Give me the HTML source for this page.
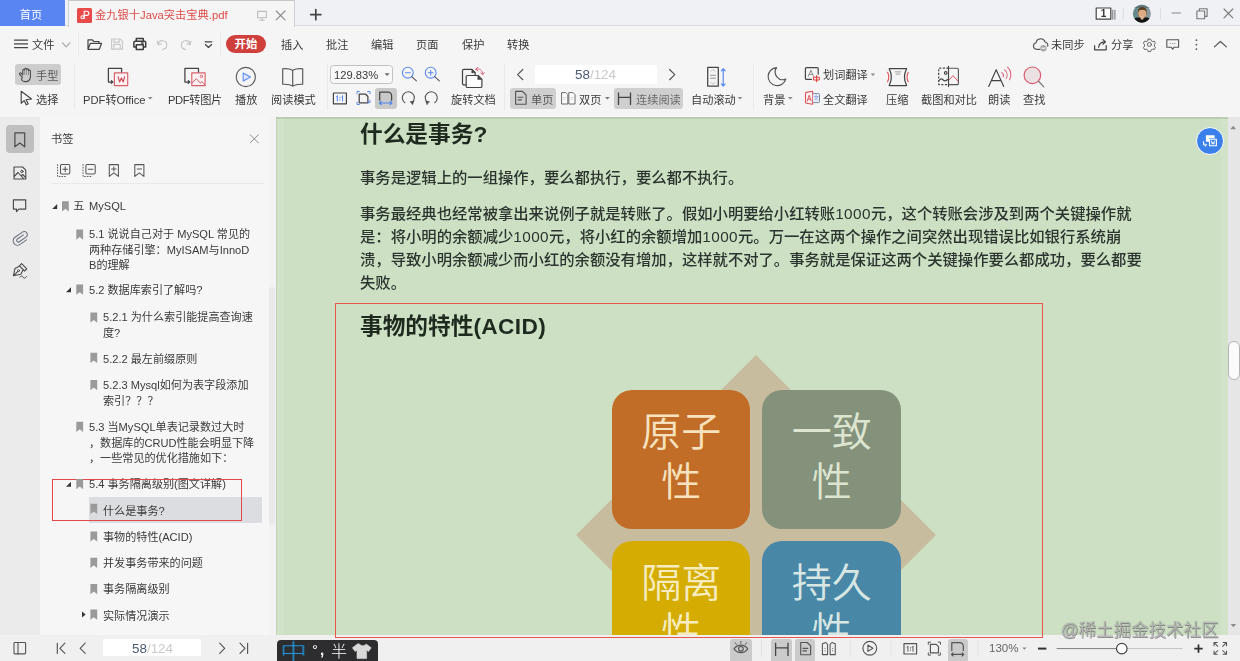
<!DOCTYPE html>
<html lang="zh-CN">
<head>
<meta charset="utf-8">
<title>金九银十Java突击宝典.pdf</title>
<style>
*{box-sizing:border-box;margin:0;padding:0}
html,body{width:1240px;height:661px;overflow:hidden}
body{position:relative;background:#f5f5f5;font-family:"Liberation Sans","Noto Sans CJK SC",sans-serif;font-size:12px;color:#3c3c3c;-webkit-font-smoothing:antialiased}
.abs{position:absolute}
.t,.bm,.doc-p,.doc-h,#home{will-change:transform}
.t{position:absolute;white-space:nowrap;line-height:16px;height:16px;font-size:11.2px;color:#3a3a3a}
svg{position:absolute;overflow:visible}
/* title bar */
#titlebar{position:absolute;left:0;top:0;width:1240px;height:26px;background:#eff1f5;border-bottom:1px solid #d9dbdf}
#home{position:absolute;left:0;top:0;width:65px;height:26px;background:#5985f3;color:#fff;font-size:11.2px;line-height:26px;text-align:center;padding-top:2px;padding-right:3px}
#tab{position:absolute;left:68px;top:0;width:227px;height:27px;background:#f5f5f5;border:1px solid #d0d1d5;border-top-color:#c6c6c6;border-bottom:none}
#menubar{position:absolute;left:0;top:27px;width:1240px;height:31px;background:#f5f5f5}
#toolbar{position:absolute;left:0;top:58px;width:1240px;height:59px;background:#f5f5f5}
.vsep{position:absolute;width:1px;background:#e9e9e9}
.sel{position:absolute;background:#cfcfcf;border-radius:3px}
/* left */
#strip{position:absolute;left:0;top:117px;width:40px;height:518px;background:#ebebeb}
#panel{position:absolute;left:40px;top:117px;width:236px;height:518px;background:#f6f6f6}
#doc{position:absolute;left:276px;top:117px;width:952px;height:518px;background:#cde0c4;overflow:hidden}
#vscroll{position:absolute;left:1228px;top:117px;width:12px;height:518px;background:#e6e6e6}
#status{position:absolute;left:0;top:635px;width:1240px;height:26px;background:#f0f0f0}
.bm{position:absolute;font-size:11.1px;line-height:15.5px;color:#3a3a3a;white-space:nowrap}
.doc-h{position:absolute;font-weight:700;color:#1f2a1f;white-space:nowrap;font-size:22.7px;line-height:30px}
.doc-p{position:absolute;font-weight:500;color:#2b342e;white-space:nowrap;font-size:15.34px;line-height:23px}
.tile{position:absolute;width:138.7px;height:138.8px;border-radius:20px;font-size:40px;font-weight:350;line-height:49.5px;text-align:center;padding-top:18.25px}
</style>
</head>
<body>
<!-- TITLE BAR -->
<div id="titlebar"></div>
<div id="home">首页</div>
<div id="tab"></div>
<div class="abs" style="left:77px;top:8px;width:15px;height:14.6px;background:#e84a4a;border-radius:1.5px"></div>
<div class="t" style="left:95px;top:7px;font-size:11.25px;color:#dc4a47">金九银十Java突击宝典.pdf</div>

<!-- MENU BAR -->
<div id="menubar"></div>
<div class="t" style="left:32.3px;top:36.5px">文件</div>
<div class="vsep" style="left:78px;top:31px;height:25px"></div>
<div class="vsep" style="left:220px;top:31px;height:25px"></div>
<div class="abs" style="left:226px;top:35px;width:40px;height:18px;border-radius:9px;background:#cf3f3c;color:#fff;font-weight:700;font-size:11.4px;line-height:18px;text-align:center">开始</div>
<div class="t" style="left:281px;top:37px">插入</div>
<div class="t" style="left:326px;top:37px">批注</div>
<div class="t" style="left:371px;top:37px">编辑</div>
<div class="t" style="left:416px;top:37px">页面</div>
<div class="t" style="left:462px;top:37px">保护</div>
<div class="t" style="left:507px;top:37px">转换</div>
<div class="t" style="left:1051px;top:37px">未同步</div>
<div class="t" style="left:1111px;top:37px">分享</div>

<!-- TOOLBAR -->
<div id="toolbar"></div>
<div class="sel" style="left:14.8px;top:63.7px;width:46.5px;height:21.5px;background:#cdcdcd"></div>
<div class="t" style="left:36.3px;top:67.5px;color:#5a5a5a">手型</div>
<div class="t" style="left:36.3px;top:92px">选择</div>
<div class="vsep" style="left:73.5px;top:64px;height:46px"></div>
<div class="t" style="left:83.2px;top:91.6px">PDF转Office</div>
<div class="t" style="left:168.4px;top:91.6px;letter-spacing:-.35px">PDF转图片</div>
<div class="t" style="left:235px;top:91.6px">播放</div>
<div class="t" style="left:271px;top:91.6px">阅读模式</div>
<div class="vsep" style="left:326.5px;top:64px;height:46px"></div>
<div class="abs" style="left:329.5px;top:64.5px;width:63px;height:19.3px;border:1px solid #c2c2c2;border-radius:3.5px;background:#f8f8f8"></div>
<div class="t" style="left:334px;top:67px">129.83%</div>
<div class="sel" style="left:375px;top:87.5px;width:21.5px;height:21px;background:#c9c9c9"></div>
<div class="t" style="left:451px;top:91.6px">旋转文档</div>
<div class="vsep" style="left:504px;top:64px;height:46px"></div>
<div class="abs" style="left:535px;top:65px;width:122px;height:19px;background:#fff;border-radius:2px"></div>
<div class="t" style="left:575px;top:66px;font-size:13.4px;line-height:18px;height:18px;color:#4b5b78">58<span style="color:#c9c9c9">/124</span></div>
<div class="sel" style="left:510px;top:88px;width:46px;height:21px"></div>
<div class="t" style="left:531px;top:91.6px;color:#555">单页</div>
<div class="t" style="left:579px;top:91.6px">双页</div>
<div class="sel" style="left:614px;top:88px;width:69px;height:21px"></div>
<div class="t" style="left:635.8px;top:91.6px;color:#6a6a6a">连续阅读</div>
<div class="t" style="left:691px;top:91.6px">自动滚动</div>
<div class="vsep" style="left:753px;top:64px;height:46px"></div>
<div class="t" style="left:763px;top:91.6px">背景</div>
<div class="t" style="left:823px;top:67px">划词翻译</div>
<div class="t" style="left:823px;top:91.6px">全文翻译</div>
<div class="t" style="left:886px;top:91.6px">压缩</div>
<div class="t" style="left:921px;top:91.6px">截图和对比</div>
<div class="t" style="left:988px;top:91.6px">朗读</div>
<div class="t" style="left:1023px;top:91.6px">查找</div>

<!-- LEFT STRIP / PANEL -->
<div id="strip"></div>
<div id="panel"></div>
<div class="sel" style="left:6px;top:125px;width:28px;height:28px;border-radius:4px;background:#bfbfbf"></div>
<div class="t" style="left:51px;top:131px">书签</div>
<div class="abs" style="left:51px;top:183px;width:213px;height:1px;background:#e9e9e9"></div>
<div class="abs" style="left:268.5px;top:117px;width:7.5px;height:518px;background:#f3f3f3"></div>
<div class="abs" style="left:268.5px;top:287px;width:6px;height:238px;background:#e9e9e9;border-radius:3px"></div>
<div class="abs" style="left:89px;top:496.5px;width:172.5px;height:26px;background:#dcdde0"></div>
<div class="bm" style="left:75px;top:199.3px"><span style="margin-left:-1.8px;margin-right:1.6px">五</span> MySQL</div>
<div class="bm" style="left:89px;top:226.6px">5.1 说说自己对于 MySQL 常见的<br>两种存储引擎：MyISAM与InnoD<br>B的理解</div>
<div class="bm" style="left:89px;top:283px">5.2 数据库索引了解吗?</div>
<div class="bm" style="left:103px;top:309.7px">5.2.1 为什么索引能提高查询速<br>度?</div>
<div class="bm" style="left:103px;top:351.5px">5.2.2 最左前缀原则</div>
<div class="bm" style="left:103px;top:377.6px">5.2.3 Mysql如何为表字段添加<br>索引？？？</div>
<div class="bm" style="left:89px;top:420px">5.3 当MySQL单表记录数过大时<br>，数据库的CRUD性能会明显下降<br>，一些常见的优化措施如下：</div>
<div class="bm" style="left:89px;top:477.2px">5.4 事务隔离级别(图文详解)</div>
<div class="bm" style="left:103px;top:503.7px">什么是事务?</div>
<div class="bm" style="left:103px;top:529.5px">事物的特性(ACID)</div>
<div class="bm" style="left:103px;top:555.9px">并发事务带来的问题</div>
<div class="bm" style="left:103px;top:582px">事务隔离级别</div>
<div class="bm" style="left:103px;top:608.5px">实际情况演示</div>
<div class="abs" style="left:52px;top:478.7px;width:190px;height:42.5px;border:1px solid #e5484a"></div>

<!-- DOC -->
<div id="doc">
<div class="abs" style="left:0;top:0;width:8px;height:519px;background:#d1e3c8"></div>
<div class="abs" style="left:945px;top:0;width:7px;height:519px;background:#d1e3c8"></div>
<div class="abs" style="left:0;top:0;width:952px;height:1.5px;background:rgba(60,70,60,.13)"></div>
<div class="abs" style="left:0;top:0;width:1px;height:519px;background:rgba(60,70,60,.1)"></div>
<div class="doc-h" style="left:84px;top:2px">什么是事务?</div>
<div class="doc-p" style="left:84.4px;top:49px">事务是逻辑上的一组操作，要么都执行，要么都不执行。</div>
<div class="doc-p" style="left:84.4px;top:85px">事务最经典也经常被拿出来说例子就是转账了。假如小明要给小红转账<span style="letter-spacing:.4px">1000</span>元，这个转账会涉及到两个关键操作就<br>是：将小明的余额减少<span style="letter-spacing:.4px">1000</span>元，将小红的余额增加<span style="letter-spacing:.4px">1000</span>元。万一在这两个操作之间突然出现错误比如银行系统崩<br>溃，导致小明余额减少而小红的余额没有增加，这样就不对了。事务就是保证这两个关键操作要么都成功，要么都要<br>失败。</div>
<div class="doc-h" style="left:84px;top:194px">事物的特性<span style="letter-spacing:.35px">(ACID)</span></div>
<svg style="left:300.4px;top:238.3px" width="360" height="360" viewBox="0 0 360 360"><polygon points="180,0 360,180 180,360 0,180" fill="#c8bc9e"/></svg>
<div class="tile" style="left:335.8px;top:273.2px;background:#c16d27;color:#f6e2bf">原子<br>性</div>
<div class="tile" style="left:486.3px;top:273.2px;background:#84927c;color:#dde5d1">一致<br>性</div>
<div class="tile" style="left:335.8px;top:423.6px;background:#d4ac02;color:#f6ecc0">隔离<br>性</div>
<div class="tile" style="left:486.3px;top:423.6px;background:#4888a6;color:#d8e6e4">持久<br>性</div>
<div class="abs" style="left:919.5px;top:9.5px;width:28.4px;height:28.4px;border-radius:15px;background:#3b80ea;border:1.6px solid #fdfdfd"></div>
</div>
<div id="vscroll"></div>
<div class="abs" style="left:1227.5px;top:340.5px;width:12px;height:39.5px;background:#fbfbfb;border:1px solid #b4b4b4;border-radius:6px"></div>

<!-- STATUS -->
<div id="status"></div>
<div class="abs" style="left:103.4px;top:639px;width:98px;height:17px;background:#fff;border-radius:1px"></div>
<div class="t" style="left:131.5px;top:640px;font-size:13.4px;line-height:18px;height:18px;color:#4b5b78">58<span style="color:#c9c9c9">/124</span></div>
<div class="abs" style="left:277px;top:640px;width:101px;height:24px;background:#2d2d2f;border-radius:4px"></div>
<div class="t" style="left:281.5px;top:639.2px;font-size:23px;line-height:26px;height:26px;color:#219fec;font-weight:300;transform:scale(1.15,.96);transform-origin:50% 50%">中</div>
<div class="t" style="left:311.5px;top:641px;font-size:15px;line-height:18px;height:18px;color:#fff">°<span style="font-weight:700;margin-left:2px">,</span></div>
<div class="t" style="left:330.5px;top:642px;font-size:16px;line-height:19px;height:19px;color:#fff;font-weight:300">半</div>
<div class="sel" style="left:729.8px;top:638.5px;width:21.8px;height:26px;background:#cbcbcb"></div>
<div class="sel" style="left:771.2px;top:638.5px;width:20.6px;height:26px;background:#cbcbcb"></div>
<div class="sel" style="left:794.7px;top:638.5px;width:20.7px;height:26px;background:#cbcbcb"></div>
<div class="sel" style="left:947.5px;top:638.5px;width:20.7px;height:26px;background:#cbcbcb"></div>
<div class="t" style="left:989px;top:640px;font-size:11.5px;color:#666">130%</div>
<div class="t" style="left:1060.5px;top:618px;font-size:17.5px;line-height:24px;height:24px;font-weight:350;color:rgba(250,250,250,.6);text-shadow:0 0 .9px rgba(60,60,60,.95),.5px .5px .6px rgba(80,80,80,.55)">@稀土掘金技术社区</div>
<div class="abs" style="left:335px;top:303px;width:707.5px;height:335px;border:1px solid #e8574c"></div>
<!-- ICON OVERLAY -->
<svg id="icons" style="left:0;top:0;pointer-events:none" width="1240" height="661" viewBox="0 0 1240 661" fill="none" stroke-linecap="round" stroke-linejoin="round">
<!--MENU-ICONS-->
<g stroke="#fff" stroke-width="1.1">
<path d="M84.2 18.5v-7.3h2.6a2.1 2.1 0 0 1 0 4.2h-2.4"/><circle cx="82.5" cy="17.3" r="1.5"/>
</g>
<path d="M257.6 11.4h8.8v6.3h-8.8zM262 17.8v2.4M259.8 20.3h4.4" stroke="#bdbdbd" stroke-width="1.1"/>
<path d="M276.2 11l8.8 8.8M285 11l-8.8 8.8" stroke="#8a8a8a" stroke-width="1.1"/>
<path d="M310.7 14.6h10.2M315.8 9.5v10.2" stroke="#444" stroke-width="1.7"/>
<g stroke="#444" stroke-width="1.2">
<path d="M14.5 40.2h13M14.5 43.9h13M14.5 47.6h13"/>
<path d="M62.5 42.8l3.7 4 3.7-4" stroke="#a8a8a8"/>
<path d="M88 49.3v-9.4h4.3l1.5 1.6h5.2v1.8M88 49.3l2.4-6h11.2l-2.3 6z"/>
<path d="M111.6 39h8.6l2.3 2.3v7.9h-10.9zM114 39v3.2h5.2V39M113.8 49v-4.6h6.4V49" stroke="#c9c9c9"/>
<path d="M136.3 41.3v-2.7h7v2.7M136.3 47h-2.4v-4.4a1.3 1.3 0 0 1 1.3-1.3h9.2a1.3 1.3 0 0 1 1.3 1.3V47h-2.4M136.3 44.8h7v4.7h-7zM141.5 42.9h1.6" stroke-width="1.5" stroke="#3c3c3c"/>
<path d="M157.4 41.2l.6 3.4 3.3-.8M158.2 44.4a4.3 4.3 0 1 1 4.6 4.9" stroke="#c6c6c6"/>
<path d="M190.8 41.2l-.6 3.4-3.3-.8M190 44.4a4.3 4.3 0 1 0-4.6 4.9" stroke="#c6c6c6"/>
<path d="M205.2 41.8h6.6M205.4 44.6l3.1 2.8 3.1-2.8" stroke-width="1.3"/>
</g>
<!--TOOLBAR-ICONS-->
<g stroke="#444" stroke-width="1.15">
<!-- hand -->
<path d="M22.3 77.2l-2.6-2.7a1 1 0 0 1 1.5-1.4l1.6 1.7v-4.6a.95.95 0 0 1 1.9 0v-.9a.95.95 0 0 1 1.9 0v.5a.95.95 0 0 1 1.9 0v1.2a.95.95 0 0 1 1.9 0v6a4.6 4.6 0 0 1-4.6 4.6h-.7a4.5 4.5 0 0 1-3.6-1.9z" stroke="#4a4a4a" stroke-width="1.1"/>
<path d="M24.7 70.4v4.2M26.6 70v4.6M28.5 71.4v3.2" stroke="#8a8a8a" stroke-width=".9"/>
<!-- cursor -->
<path d="M21.2 91.3v11.9l2.9-2.6 2.2 4.2 1.9-1-2.2-4.1 5.5-.7z"/>
<!-- pdf2office -->
<path d="M121.6 72.3v-3.9h-13.2v13.6h4.2M111.3 80.6l1.6 1.4-1.6 1.4" stroke-width="1.25"/>
<rect x="114.4" y="72.9" width="13.3" height="12.7" fill="#fdf0f1" stroke="#d8606c"/>
<path d="M118.1 76.7l1.5 5.2 1.8-4 1.8 4 1.5-5.2" stroke="#cf4659" stroke-width="1.1"/>
<!-- pdf2img -->
<path d="M198.5 72.3v-3.9h-13.6v13.6h4.6M188.2 80.6l1.6 1.4-1.6 1.4" stroke-width="1.25"/>
<rect x="191.8" y="72.9" width="13.3" height="12.7" fill="#fdf0f1" stroke="#d8606c"/>
<path d="M192 83.2l4.3-4.5 4 4.3 1.6-1.4 3 3.2" stroke="#d8606c" stroke-width="1"/>
<circle cx="201.4" cy="76.4" r="1.2" stroke="#d8606c" stroke-width="1"/>
<!-- play -->
<circle cx="245.8" cy="77" r="9.6" stroke="#5a5a5a" stroke-width="1.1"/>
<path d="M243.2 73v8l7.3-4z" stroke="#5b8bf0" fill="#dfe8fd" stroke-width="1.1"/>
<!-- book -->
<path d="M292.7 70.2c-2.6-1.5-6.5-1.7-10-1.5v15.6c3.5-.2 7.4 0 10 1.8c2.6-1.8 6.5-2 10-1.8v-15.6c-3.5-.2-7.4 0-10 1.5zM292.7 70.2v15.6" stroke="#555" stroke-width="1.15"/>
</g>
<!-- zoom group -->
<path d="M384.6 73.3h5l-2.5 2.8z" fill="#6a6a6a" stroke="none"/>
<g stroke-width="1.1">
<circle cx="407.8" cy="72.7" r="5.4" stroke="#5b8bf0"/><path d="M405.3 72.7h5" stroke="#5b8bf0"/><path d="M411.8 76.7l4.6 4.2" stroke="#555"/>
<circle cx="430.7" cy="72.7" r="5.4" stroke="#5b8bf0"/><path d="M428.2 72.7h5M430.7 70.2v5" stroke="#5b8bf0"/><path d="M434.7 76.7l4.6 4.2" stroke="#555"/>
<rect x="333.4" y="93" width="13" height="10.8" stroke="#444" stroke-width="1.2"/>
<path d="M337.3 96v5M342.6 96v5M336.6 96.7l.7-.7M341.9 96.7l.7-.7" stroke="#4f83ee" stroke-width="1"/><path d="M339.9 97.4v.3M339.9 99.7v.3" stroke="#4f83ee" stroke-width="1"/>
<path d="M359.2 94h6.2l2.5 2.5v6.4h-8.7z" stroke="#444" stroke-width="1.25"/>
<path d="M357 94.3v-2.3h2.3M367.7 92h2.3v2.3M370 100.7v2.3h-2.3M359.3 105h-2.3v-2.3" stroke="#5b8bf0" stroke-width="1" transform="translate(0 -.5)"/>
<path d="M379.7 100.2v-8h8.3a3.6 3.6 0 0 1 3.6 3.6v4.4" stroke="#444" stroke-width="1.25"/>
<path d="M379.6 103h12.2M381.2 101.4l-1.7 1.6 1.7 1.6M390.2 101.4l1.7 1.6-1.7 1.6" stroke="#4f83ee" stroke-width="1.15"/>
<path d="M404.9 102.7a6 6 0 1 1 7.3-.3" stroke="#555"/><path d="M410.4 101.6l3.3-.3-1 3.2z" fill="#444" stroke="#444" stroke-width=".5"/>
<path d="M434.7 102.7a6 6 0 1 0-7.3-.3" stroke="#555"/><path d="M429.2 101.6l-3.3-.3 1 3.2z" fill="#444" stroke="#444" stroke-width=".5"/>
</g>
<!-- rotate doc -->
<g stroke="#444" stroke-width="1.2">
<path d="M466 84.9h-2.2a1.3 1.3 0 0 1-1.3-1.3v-12.9a1.3 1.3 0 0 1 1.3-1.3h8.2l3.2 3.2v2.6"/>
<path d="M467.5 75.5h10.6l3.8 3.8v6.9a1.3 1.3 0 0 1-1.3 1.3h-13.1a1.3 1.3 0 0 1-1.3-1.3v-9.4a1.3 1.3 0 0 1 1.3-1.3z" fill="#fcfcfc"/>
<path d="M478 75.6l3.8 3.8h-3.8z" fill="#444" stroke-width=".6"/><path d="M472 69.6l3.1 3.1h-3.1z" fill="#444" stroke-width=".6"/>
<path d="M476 69.4c3.5-1.6 6.9.8 6.6 4.9M477.6 67.4l-1.9 2 2.2 1.5M480.8 72.9l1.8 1.8 1.7-2" stroke="#e0607a" stroke-width="1"/>
<!-- pager -->
<path d="M522.8 69.5l-5.2 5.1 5.2 5.1M669.6 69.5l5.2 5.1-5.2 5.1" stroke="#555" stroke-width="1.2"/>
<!-- single page -->
<path d="M515.6 91.4h6.9l3.6 3.6v9.2h-10.5zM518 97.2h5M518 99.8h3.5" stroke="#555" stroke-width="1.15"/>
<!-- double page -->
<path d="M562 92.6h3.8l2 2v9.4h-5.8zM569.2 92.6h3.8l2 2v9.4h-5.8z" fill="#fdfdfd" stroke="#6a6a6a" stroke-width="1"/>
<path d="M563.5 97.5h2.6M563.5 99.6h1.8M570.7 97.5h2.6M570.7 99.6h1.8" stroke="#c9c9c9" stroke-width=".8"/>
<path d="M605 97h4.8l-2.4 2.6z" fill="#777" stroke="none"/>
<!-- continuous -->
<path d="M618.5 92.4v12.6M630.5 92.4v12.6M618.5 97.3h12" stroke="#444" stroke-width="1.3" stroke-linecap="butt"/>
<!-- auto scroll -->
<rect x="707.7" y="67.4" width="10.6" height="18.8" stroke-width="1.25"/>
<path d="M711 71.2l2-1.7 2 1.7M711 82.4l2 1.7 2-1.7" stroke="#b9b9b9" stroke-width=".9"/><path d="M710.5 75.3h5M710.5 78.2h5" stroke="#8a8a8a" stroke-width=".9"/>
<path d="M723.2 69v16.5M721.3 70.8l1.9-2.2 1.9 2.2M721.3 83.9l1.9 2.2 1.9-2.2" stroke="#5b8bf0" stroke-width="1.2"/>
<path d="M147.8 97h4.8l-2.4 2.6zM737.6 97h4.8l-2.4 2.6zM787.9 97h4.8l-2.4 2.6zM870.6 73.4h4.6l-2.3 2.5z" fill="#8a8a8a" stroke="none"/>
<!-- moon -->
<path d="M776.6 67.6a9 9 0 1 0 9.2 11.4a7.6 7.6 0 0 1-9.2-11.4z" stroke="#555" stroke-width="1.15"/>
<!-- translate word -->
<path d="M811.5 79.3h-5a1.1 1.1 0 0 1-1.1-1.1v-9.4a1.1 1.1 0 0 1 1.1-1.1h10.6a1.1 1.1 0 0 1 1.1 1.1v5.4" stroke-width="1.2"/>
<path d="M808.3 76.4l2.6-6.2 2.6 6.2M809.2 74.4h3.4" stroke="#8e8e8e" stroke-width="1"/>
<path d="M813.9 77.2h5.4v2.8h-5.4zM816.6 75.6v6.2" stroke="#e23b3b" stroke-width="1"/>
<!-- translate full -->
<path d="M812.6 91.3l-6.2 1.1a1 1 0 0 0-.9 1v8.8a1 1 0 0 0 .9 1l6.2 1.1z" stroke="#e2525a" stroke-width="1.1" fill="#fdf3f3"/>
<path d="M807.3 101l1.9-5.8 1.9 5.8M808 99.2h2.4" stroke="#e2525a" stroke-width=".95"/>
<path d="M812.8 93.6h5.8a.9.9 0 0 1 .9.9v7.2a.9.9 0 0 1-.9.9h-5.8" stroke="#7f8aa0" stroke-width="1" fill="#e9edf6"/>
<path d="M814.4 96.6h3.6M814.6 100.2l3.2-3.4M814.8 97.3l3 2.9M816.2 95.5v.9" stroke="#7f9be0" stroke-width=".7"/>
<!-- compress -->
<path d="M889.2 68.7h17.4c-2.7 5.2-2.7 11.4 0 16.8h-17.4c2.7-5.4 2.7-11.6 0-16.8z" stroke-width="1.25"/>
<path d="M895.3 71.9h5.4M896.1 74.1h3.8" stroke="#8a8a8a" stroke-width=".8"/>
<path d="M887.6 72.2c1.5 3.2 1.5 6.4 0 9.6M908.2 72.2c-1.5 3.2-1.5 6.4 0 9.6" stroke="#e2525a" stroke-width="1.1"/>
<!-- screenshot -->
<path d="M948.5 68.2h-9.8v16.4h9.8" stroke-dasharray="2.1 1.5" stroke-linecap="butt" stroke-width="1.25"/>
<path d="M948.5 68.2h8.7a1.2 1.2 0 0 1 1.2 1.2v14a1.2 1.2 0 0 1-1.2 1.2h-8.7" stroke-width="1.15" stroke="#555"/>
<path d="M948.5 66.4v20.2" stroke-width="1.15"/>
<path d="M939.4 80.1c1.5-1.7 2.5-1.7 3.7-.3s2.6 1.5 4.6-.2" stroke-width="1.3"/><circle cx="945.7" cy="72.9" r="1.3" stroke-width="1.1"/>
<path d="M949.4 79.6l3.6-4 4.7 5.3" stroke="#e2525a" stroke-width="1"/>
<!-- read aloud -->
<path d="M988.7 86.4l7.5-16.7 7.5 16.7M991.4 80.6h9.7" stroke-width="1.15"/>
<path d="M1001.8 72.6a3.3 3.3 0 0 1 1.3 4.1M1004.6 69.9a6.5 6.5 0 0 1 1.7 8.4M1007.5 67.2a10 10 0 0 1 2 12.6" stroke="#e0607a" stroke-width="1.05"/>
<!-- find -->
<circle cx="1032.4" cy="75.3" r="8.3" stroke="#dc5a70" fill="#ebe1e2" stroke-width="1.15"/>
<path d="M1038.5 81.3l5.3 5.6" stroke="#777" stroke-width="1.25"/>
</g>
<!-- title right -->
<g stroke-width="1.15" stroke="#444">
<rect x="1096.2" y="8" width="14.6" height="11.2" fill="#fff" stroke-width="1.2"/>
<text x="1103.5" y="17.3" font-size="10" font-weight="700" fill="#333" stroke="none" text-anchor="middle" font-family="Liberation Sans, sans-serif">1</text>
<path d="M1112.8 10.2v9M1114.9 10.2v9" stroke="#666" stroke-width=".9"/>
<path d="M1123.3 8v11.5M1160.6 8v11.5" stroke="#dcdde0" stroke-width="1"/>
<path d="M1172 13h8.6" stroke="#8a8a8a"/>
<path d="M1196.9 11h7.7v7.7h-7.7zM1199.4 11v-2.3h7.7v7.7h-2.4" stroke="#7a7a7a"/>
<path d="M1224 9l8.8 8.8M1232.8 9l-8.8 8.8" stroke="#7a7a7a"/>
<!-- cloud -->
<path d="M1040 49.3h-3.5a3.3 3.3 0 0 1-.5-6.5a4.7 4.7 0 0 1 9.1-.8a3.6 3.6 0 0 1 2.6 4.2" stroke="#555"/>
<circle cx="1043.4" cy="48.2" r="3.2" fill="#a9a9a9" stroke="none"/><path d="M1041.8 48.2h3.2" stroke="#fff" stroke-width="1"/>
<!-- share -->
<path d="M1094.6 45.6v4.2h11.6v-4.2M1098.6 47.2c.4-3.2 2.6-5.3 6.6-5.3M1102.9 39.6l2.6 2.3-2.6 2.3" stroke="#444" stroke-width="1.2"/>
<!-- gear -->
<g transform="translate(1149.4 44.5) scale(.86) translate(-1149.4 -44.5)"><path d="M1148.1 38.2h2.6l.7 1.9 1.7 1 2-.4 1.3 2.3-1.3 1.5v2l1.3 1.5-1.3 2.3-2-.4-1.7 1-.7 1.9h-2.6l-.7-1.9-1.7-1-2 .4-1.3-2.3 1.3-1.5v-2l-1.3-1.5 1.3-2.3 2 .4 1.7-1z" stroke="#555" stroke-width="1.05"/>
<circle cx="1149.4" cy="44.5" r="2.3" stroke="#555" stroke-width="1.05"/></g>
<!-- chat -->
<path d="M1166.8 39.8h11.8v7.4h-4.4l-1.5 2-1.5-2h-4.4z" stroke="#555" stroke-width="1.1"/>
<path d="M1170.3 43.5h.4M1172.5 43.5h.4M1174.7 43.5h.4" stroke="#999" stroke-width="1"/>
<path d="M1196.4 40.1v.1M1196.4 44.6v.1M1196.4 49.1v.1" stroke="#555" stroke-width="1.7"/>
<path d="M1214.4 46.9l6-5.4 6 5.4" stroke="#555" stroke-width="1.2"/>
</g>
<!-- avatar -->
<defs><linearGradient id="avg" x1="0" y1="0" x2="1" y2="0"><stop offset="0" stop-color="#5c8587"/><stop offset="1" stop-color="#8e9ca2"/></linearGradient>
<clipPath id="avc"><circle cx="1141.9" cy="13.7" r="9"/></clipPath></defs>
<g clip-path="url(#avc)" stroke="none">
<rect x="1132" y="4" width="20" height="20" fill="url(#avg)"/>
<rect x="1132" y="4" width="20" height="4" fill="#4f6468" opacity=".6"/>
<ellipse cx="1142.3" cy="12.6" rx="4.4" ry="5.6" fill="#5a3b1e"/>
<ellipse cx="1142.3" cy="13.6" rx="4.1" ry="5.2" fill="#dcab84"/>
<path d="M1138 11c.4-4.6 8.2-4.6 8.6 0c-2.6-1.8-6-1.8-8.6 0z" fill="#5a3b1e"/>
<path d="M1132 24v-4.2c2.4-2 5.4-2.4 8-2.2l2.4 1.6 2-1.6c2.6-.2 5.2.4 7.6 2.2v4.2z" fill="#141414"/>
<path d="M1140.8 16.2h2.4v3.2h-2.4z" fill="#e4bc98"/>
</g>
<!-- strip icons -->
<g stroke="#4a4a4a" stroke-width="1.2">
<path d="M14.9 132.8h9.8v14l-4.9-3.8-4.9 3.8z"/>
<path d="M14 167h8.6l3.2 3.2v8.8h-11.8zM14.2 176.5l3.8-4 5.2 5.6M21.2 175.9l1.5-1.4 3 3.2" stroke-width="1.1"/><circle cx="21.9" cy="171.4" r="1.2" stroke-width="1"/>
<path d="M13.4 199.8h12.3v9.3h-6.8l-2.4 2.6v-2.6h-3.1z" stroke-width="1.15"/>
<path transform="translate(20.3 237.4) rotate(-35) scale(.88) translate(-9 1.2)" d="M13.6 -1.6H5.2a1.9 1.9 0 0 0 0 3.8h9.2a3.5 3.5 0 0 0 0-7H4.2a5 5 0 0 0 0 10h9" stroke="#6b7080" stroke-width="1.15"/>
<path d="M21.6 263.6l5.2 5.2-2.2 2.2-5.2-5.2zM19.6 266l-4.6 2.4-1.6 7.4 7.4-1.6 2.4-4.6M13.6 275.6l4.3-4.3" stroke-width="1.1"/><circle cx="18.6" cy="270.6" r="1" stroke-width=".9"/>
<path d="M19.8 277.3c1.4-1.8 2.4-1.8 3.2-.2s2.2 1.4 3.8-.8" stroke-width="1"/>
</g>
<!-- panel header icons -->
<g stroke="#555" stroke-width="1.05">
<rect x="60.5" y="164.4" width="9.3" height="9.5" rx="1.2"/><path d="M62.8 169.2h4.8M65.2 166.8v4.8"/>
<path d="M57.6 164.2v12.3h8.4" stroke-dasharray="1.6 1.1" stroke-linecap="butt" stroke-width=".95"/>
<rect x="85.9" y="164.4" width="9.3" height="9.5" rx="1.2"/><path d="M88.2 169.2h4.8"/>
<path d="M83 164.2v12.3h8.4" stroke-dasharray="1.6 1.1" stroke-linecap="butt" stroke-width=".95"/>
<path d="M109.3 164.6h9.1v11.8l-4.55-3.5-4.55 3.5zM111.7 168.9h4.4M113.9 166.7v4.4"/>
<path d="M134.8 164.6h9.1v11.8l-4.55-3.5-4.55 3.5zM137.2 168.9h4.4"/>
<path d="M250.3 134.8l8 8M258.3 134.8l-8 8" stroke="#8a8a8a" stroke-width="1"/>
</g>
<g fill="#9a9a9a" stroke="none">
<path d="M62 201.2h6.8v10.2l-3.4-2.6-3.4 2.6z"/><path d="M57.2 203.9v5h-5z" fill="#333"/>
<path d="M76.3 229.5h6.8v10.2l-3.4-2.6-3.4 2.6z"/>
<path d="M76.3 284.6h6.8v10.2l-3.4-2.6-3.4 2.6z"/><path d="M71.0 287.3v5h-5z" fill="#333"/>
<path d="M90.4 312.5h6.8v10.2l-3.4-2.6-3.4 2.6z"/>
<path d="M90.4 352.8h6.8v10.2l-3.4-2.6-3.4 2.6z"/>
<path d="M90.4 380h6.8v10.2l-3.4-2.6-3.4 2.6z"/>
<path d="M76.3 421.7h6.8v10.2l-3.4-2.6-3.4 2.6z"/>
<path d="M76.3 479h6.8v10.2l-3.4-2.6-3.4 2.6z"/><path d="M71.0 481.7v5h-5z" fill="#333"/>
<path d="M90.4 503.8h6.8v10.2l-3.4-2.6-3.4 2.6z"/>
<path d="M90.4 531.4h6.8v10.2l-3.4-2.6-3.4 2.6z"/>
<path d="M90.4 557.7h6.8v10.2l-3.4-2.6-3.4 2.6z"/>
<path d="M90.4 584h6.8v10.2l-3.4-2.6-3.4 2.6z"/>
<path d="M90.4 609.6h6.8v10.2l-3.4-2.6-3.4 2.6z"/><path d="M82 611.6l3.6 3-3.6 3z" fill="#333"/>
</g>
<!--SIDE-ICONS-->
<!-- float btn icon -->
<g stroke="none" fill="#fff">
<path d="M1205.9 135.2h8.7v3.1h-5.6v3.4h-3.1z"/>
<rect x="1209.5" y="139.3" width="6.9" height="6.4" fill="none" stroke="#fff" stroke-width="1.1"/>
<path d="M1211.3 140.9l.9 3.3.8-2.3.8 2.3.9-3.3" fill="none" stroke="#fff" stroke-width=".8"/>
<path d="M1203.6 141.6v3.4h2.6M1205.3 143.8l1.2 1.2-1.2 1.2" fill="none" stroke="#fff" stroke-width="1"/>
</g>
<!-- status icons -->
<g stroke="#555" stroke-width="1.15">
<rect x="14" y="642.5" width="11.6" height="11.4" rx=".8" stroke-width="1.1"/><path d="M18 642.5v11.4" stroke-width="1.1"/>
<path d="M57.3 643.2v10.2M64.9 643.2l-5 5.1 5 5.1M85.2 643.2l-5 5.1 5 5.1M219.7 643.2l5 5.1-5 5.1M240 643.2l5 5.1-5 5.1M247.6 643.2v10.2"/>
<!-- eye -->
<path d="M734 648.8c3.6-5 10.2-5 13.8 0c-3.6 5-10.2 5-13.8 0z"/><circle cx="740.9" cy="648.8" r="2.3"/>
<path d="M736.3 644.3l-1.1-1.6M740.9 643.3v-1.8M745.5 644.3l1.1-1.6" stroke-width="1"/>
<path d="M761.5 640v17M850.3 640v17M891 640v17M978 640v17" stroke="#e3e3e3" stroke-width="1"/>
<path d="M775.6 642.8v13.2M788 642.8v13.2M775.6 647.9h12.4" stroke="#444" stroke-width="1.3" stroke-linecap="butt"/>
<path d="M800.7 642.5h6.5l3.4 3.4v8.8h-9.9zM803 648.3h4.8M803 650.9h3.4"/>
<path d="M822.4 643.8l3.4-1.3 1.8 1.8v10.3h-5.2zM830.1 644.3l1.8-1.8 3.4 1.3v10.8h-5.2z" stroke-width="1.05"/>
<path d="M825 648.3v.1M825 650.8v.1M832.7 648.3v.1M832.7 650.8v.1" stroke-width="1"/>
<circle cx="869.8" cy="648.2" r="6.9"/><path d="M867.9 645v6.4l5-3.2z" stroke-width="1.05"/>
<rect x="904" y="643.6" width="12.6" height="10.4" stroke-width="1.15"/>
<path d="M907.9 646.5v4.8M913 646.5v4.8M907.2 647.2l.7-.7M912.3 647.2l.7-.7M910.5 647.8v.3M910.5 650.1v.3" stroke-width=".95"/>
<path d="M930.4 644.3h5.8l2.3 2.3v6.3h-8.1z" stroke-width="1.2"/>
<path d="M928.3 644.3v-2.2h2.2M938.2 642.1h2.2v2.2M940.4 652.9v2.2h-2.2M930.5 655.1h-2.2v-2.2" stroke-width="1"/>
<path d="M951.8 650.6v-8h8a3.5 3.5 0 0 1 3.5 3.5v4.5" stroke-width="1.2"/>
<path d="M951.5 654.4h12.2M953.1 652.8l-1.7 1.6 1.7 1.6M962.1 652.8l1.7 1.6-1.7 1.6" stroke-width="1.1"/>
<path d="M1022.2 647.4h4.4l-2.2 2.4z" fill="#8a8a8a" stroke="none"/>
<path d="M1038 648.6h8.4" stroke="#333" stroke-width="2" stroke-linecap="butt"/>
<path d="M1194.3 648.6h8.4M1198.5 644.4v8.4" stroke="#333" stroke-width="1.8" stroke-linecap="butt"/>
<path d="M1057 648.6h59.4" stroke="#7d7d7d" stroke-width="1"/><path d="M1127.2 648.6h55" stroke="#c3c3c3" stroke-width="1"/>
<circle cx="1121.8" cy="648.6" r="5.3" fill="#fff" stroke="#444" stroke-width="1.2"/>
<path d="M1214 645.8v-3.3h3.3M1223.2 642.5h3.3v3.3M1226.5 651v3.3h-3.3M1217.3 654.3h-3.3v-3.3M1214.2 642.7l3.6 3.6M1226.3 642.7l-3.6 3.6M1226.3 654.1l-3.6-3.6M1214.2 654.1l3.6-3.6" stroke-width="1.05"/>
<!-- shirt -->
<path d="M357.4 644l-5 3.8 2.6 3.6 2-1.2v8.4h9.6v-8.4l2 1.2 2.6-3.6-5-3.8c-1.6 2.2-5.4 2.2-6.8 0z" fill="#d9d9d9" stroke="#d9d9d9" stroke-width=".6"/>
<!-- vscroll arrows -->
<path d="M1230.4 129.2l2.8-3.4 2.8 3.4z" fill="#8a8a8a" stroke="none"/>
<path d="M1230.6 624l2.8 3.2 2.8-3.2z" fill="#8a8a8a" stroke="none"/>
</g>

</svg>
</body>
</html>
